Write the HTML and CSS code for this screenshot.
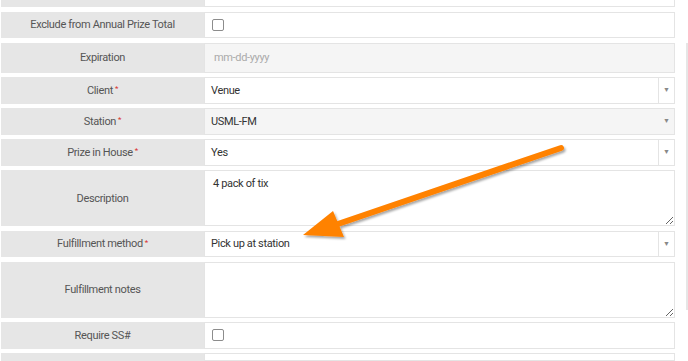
FILE: index.html
```html
<!DOCTYPE html>
<html lang="en">
<head>
  <meta charset="UTF-8" />
  <title>Prize details</title>
  <link rel="stylesheet" href="styles.css">
</head>
<body>

  <div class="form">
    <!-- row cut off at the top -->
    <div class="row">
      <div class="label"></div>
      <div class="field"></div>
    </div>

    <div class="row">
      <div class="label">Exclude from Annual Prize Total</div>
      <div class="field"><span class="checkbox"></span></div>
    </div>

    <div class="row row-date">
      <div class="label">Expiration</div>
      <div class="field readonly"><span class="placeholder">mm-dd-yyyy</span></div>
    </div>

    <div class="row">
      <div class="label">Client<span class="req">*</span></div>
      <div class="field select"><span class="value">Venue</span><span class="caret">&#9660;</span></div>
    </div>

    <div class="row">
      <div class="label">Station<span class="req">*</span></div>
      <div class="field select readonly"><span class="value">USML-FM</span><span class="caret">&#9660;</span></div>
    </div>

    <div class="row">
      <div class="label">Prize in House<span class="req">*</span></div>
      <div class="field select"><span class="value">Yes</span><span class="caret">&#9660;</span></div>
    </div>

    <div class="row row-tall">
      <div class="label">Description</div>
      <textarea class="field area">4 pack of tix</textarea>
    </div>

    <div class="row">
      <div class="label">Fulfillment method<span class="req">*</span></div>
      <div class="field select"><span class="value">Pick up at station</span><span class="caret">&#9660;</span></div>
    </div>

    <div class="row row-tall">
      <div class="label">Fulfillment notes</div>
      <textarea class="field area"></textarea>
    </div>

    <div class="row">
      <div class="label">Require SS#</div>
      <div class="field"><span class="checkbox"></span></div>
    </div>

    <!-- row cut off at the bottom -->
    <div class="row row-cut">
      <div class="label"></div>
      <div class="field"></div>
    </div>
  </div>

  <!-- scrollbar thumb -->
  <div class="scroll-thumb"></div>

  <!-- annotation arrow -->
  <svg class="annotation" width="688" height="361" viewBox="0 0 688 361">
    <defs>
      <filter id="shade" x="-10%" y="-20%" width="130%" height="150%">
        <feDropShadow dx="1.5" dy="2" stdDeviation="1.2" flood-color="#000" flood-opacity="0.35" />
      </filter>
    </defs>
    <g filter="url(#shade)" fill="#ff8200">
      <line x1="561" y1="148" x2="332" y2="226" stroke="#ff8200" stroke-width="6" stroke-linecap="round" />
      <polygon points="303,235 333,211 344,237" />
    </g>
  </svg>

</body>
</html>
```

FILE: styles.css
```css
body {
  margin: 0;
  font-family: Roboto, "Open Sans", sans-serif;
  font-size: 11px;
  letter-spacing: -0.35px;
  color: #333;
  background-color: #fff;
  overflow: hidden;
}
.form {
  margin-top: -19.5px;
  margin-left: 1px;
  display: flex;
  flex-direction: column;
  gap: 4.5px;
}
.row {
  display: grid;
  grid-template-columns: 203px 471px;
  height: 26.5px;
}
.row-date {
  height: 30px;
}
.row-tall {
  height: 56px;
}
.row-cut {
  height: 8px;
}
.label {
  background-color: #e6e6e6;
  color: #555;
  display: flex;
  align-items: center;
  justify-content: center;
}
.req {
  color: #d9302c;
  font-size: 8px;
  margin-left: 2px;
  margin-top: -3px;
}
.field {
  box-sizing: border-box;
  border: 1px solid #e4e4e4;
  background-color: #fff;
  display: flex;
  align-items: center;
  padding-left: 6px;
  color: #333;
}
.readonly {
  background-color: #f5f5f5;
}
.placeholder {
  color: #aaa;
  padding-left: 3px;
}
.checkbox {
  width: 10px;
  height: 10px;
  border: 1.3px solid #8c8c8c;
  border-radius: 2px;
  margin-left: 1px;
}
/* selects */
.select .value {
  flex-grow: 1;
}
.select .caret {
  width: 15px;
  align-self: stretch;
  display: flex;
  align-items: center;
  justify-content: center;
  border-left: 1px solid #e4e4e4;
  color: #888;
  font-size: 7px;
  letter-spacing: 0;
}
.select.readonly .caret {
  border-left: none;
}
/* textareas */
.area {
  display: block;
  width: 471px;
  height: 56px;
  margin: 0;
  padding: 6px 8px;
  font-family: inherit;
  font-size: 11px;
  letter-spacing: -0.35px;
  color: #333;
  resize: vertical;
  outline: none;
}
.scroll-thumb {
  position: absolute;
  left: 686px;
  top: 43px;
  width: 2px;
  height: 267px;
  background-color: #e6e6e6;
}
.annotation {
  position: absolute;
  left: 0;
  top: 0;
  pointer-events: none;
}
```
